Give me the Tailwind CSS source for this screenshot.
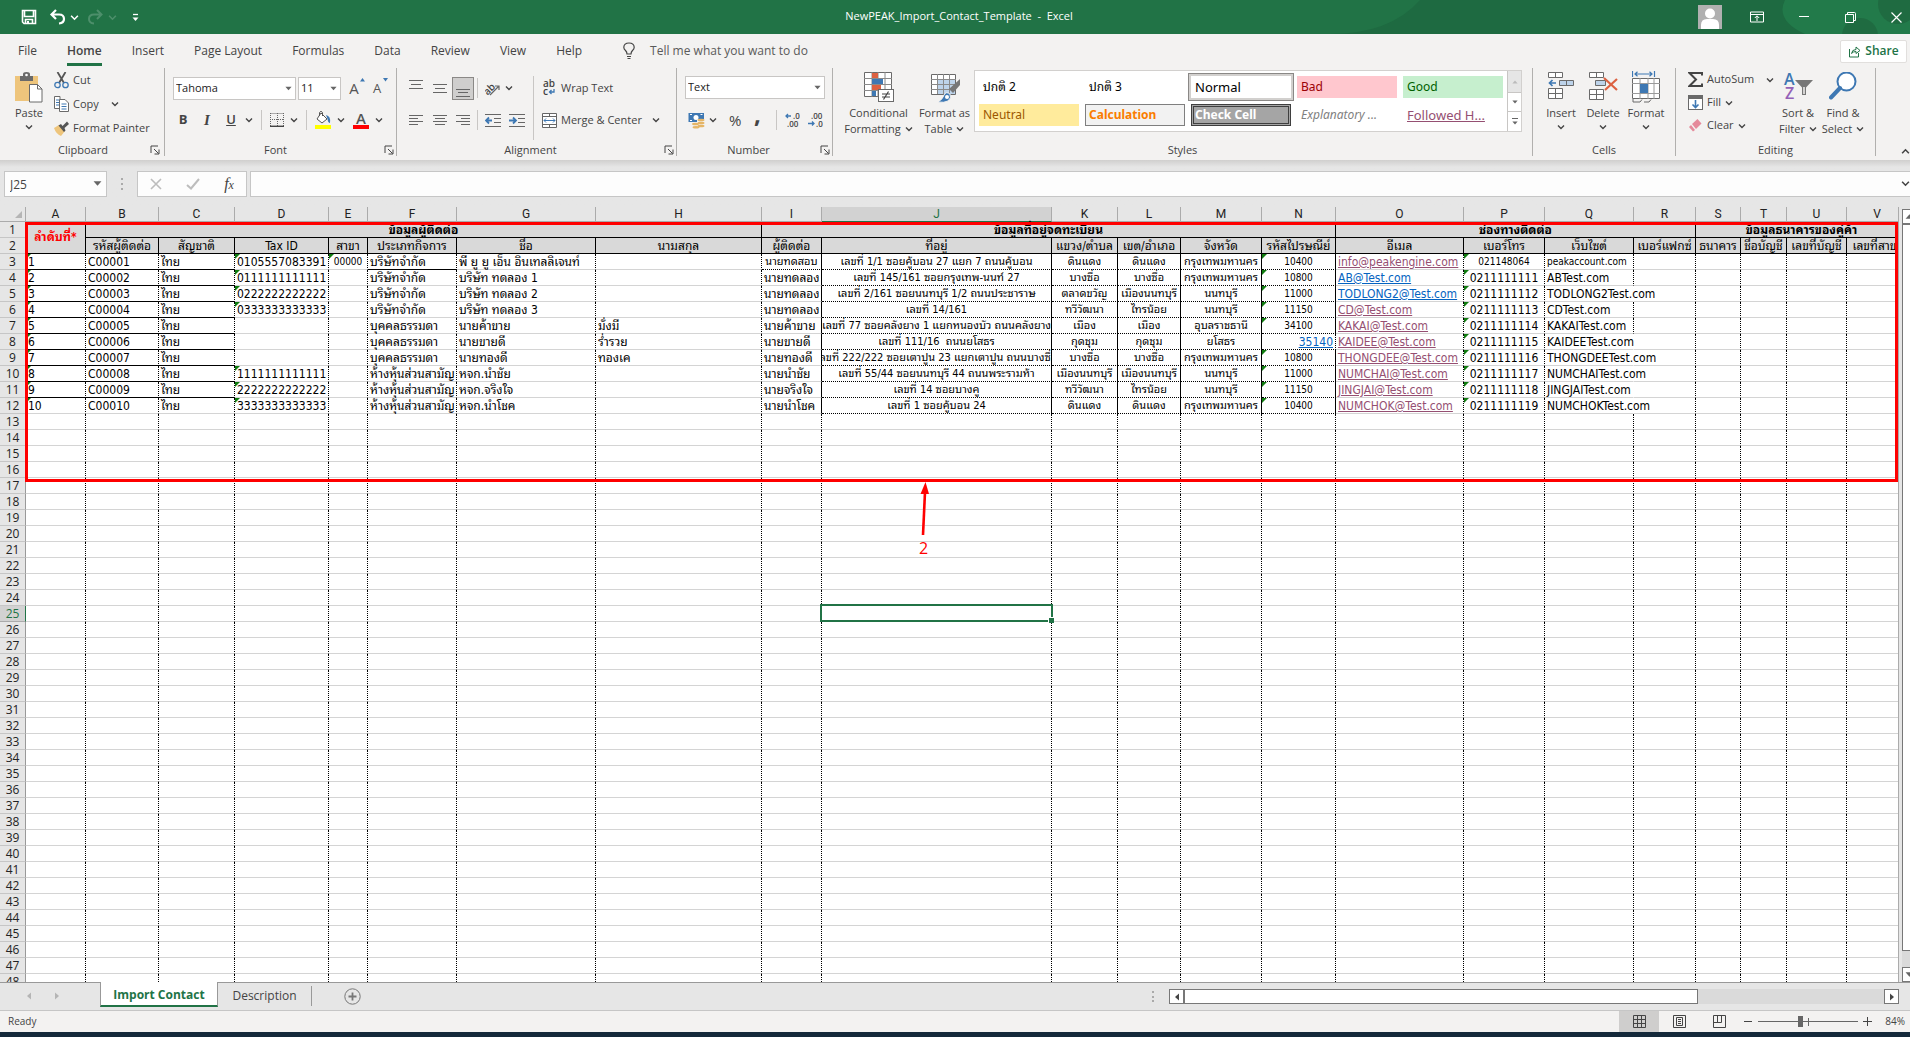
<!DOCTYPE html>
<html lang="en">
<head>
  <meta charset="UTF-8" />
  <meta name="viewport" content="width=device-width, initial-scale=1.0"/>
  <title>NewPEAK_Import_Contact_Template - Excel</title>
  <script src="https://cdn.jsdelivr.net/npm/@tailwindcss/browser@4"></script>
</head>
<body class="h-screen flex flex-col overflow-hidden bg-[#14293a] font-['Open_Sans','Noto_Sans_Thai_Looped',sans-serif] text-[11px] text-[#444444]">

  <!-- Shared icon symbols -->
  <svg class="hidden">
    <symbol id="chev" viewBox="0 0 8 8"><path d="M1 2.5 L4 5.5 L7 2.5" fill="none" stroke="currentColor" stroke-width="1.4"/></symbol>
    <symbol id="down" viewBox="0 0 8 8"><path d="M0.5 2 H7.5 L4 6 Z" fill="currentColor"/></symbol>
    <symbol id="launch" viewBox="0 0 10 10"><path d="M1 8 V1 H8 M4 4 L8.5 8.5 M9 4.5 V9 H4.5" fill="none" stroke="currentColor"/></symbol>
  </svg>

  <!-- Title bar -->
  <header class="h-[34px] shrink-0 bg-[#217346] text-white flex items-center relative">
    <div class="flex items-center pl-[21px]">
      <button aria-label="Save" class="w-4"><svg width="16" height="16" viewBox="0 0 16 16"><path d="M1.5 1.5 H14.5 V14.5 H3 L1.5 13 Z M3.5 1.5 V7.5 H12.5 V1.5 M4.5 14.5 V10.5 H11.5 V14.5" fill="none" stroke="white" stroke-width="1.6"/><rect x="6" y="12" width="2" height="3" fill="white"/></svg></button>
      <button aria-label="Undo" class="ml-3 flex items-center gap-1"><svg width="17" height="16" viewBox="0 0 17 16"><path d="M7 1 L2.5 5.5 L7 10 M3 5.5 H10 Q15 5.5 15 10 Q15 14 10 14.5" fill="none" stroke="white" stroke-width="2.2"/></svg><svg width="9" height="9"><use href="#chev"/></svg></button>
      <button aria-label="Redo" class="ml-2 flex items-center gap-1 text-[#4d8f6b]"><svg width="17" height="16" viewBox="0 0 17 16"><path d="M10 1 L14.5 5.5 L10 10 M14 5.5 H7 Q2 5.5 2 10 Q2 14 7 14.5" fill="none" stroke="currentColor" stroke-width="2"/></svg><svg width="9" height="9"><use href="#chev"/></svg></button>
      <button aria-label="Customize toolbar" class="ml-[14px]"><svg width="9" height="9" viewBox="0 0 9 9"><path d="M2 1.5 H7" stroke="white" stroke-width="1.3"/><path d="M1.5 4.5 H7.5 L4.5 8 Z" fill="white"/></svg></button>
    </div>
    <div class="flex-1"></div>
    <div class="w-[640px] h-full relative flex items-center justify-end bg-[#1e6840]/80 overflow-hidden">
      <svg class="absolute inset-0" width="640" height="34"><path d="M0 0 H150 Q120 34 60 34 H0 Z" fill="#217346"/><path d="M515 0 H640 V34 H535 Q505 20 515 0 Z" fill="#227a4a"/><circle cx="590" cy="36" r="18" fill="#1f6b41"/><circle cx="628" cy="4" r="20" fill="#1f6b41"/></svg>
      <button aria-label="Account" class="relative size-6 bg-[#b0b0b0] mr-7"><svg width="24" height="24" viewBox="0 0 24 24"><circle cx="12" cy="8.5" r="5" fill="white"/><path d="M3 24 V20 Q3 14 9 14 H15 Q21 14 21 20 V24 Z" fill="white"/></svg></button>
      <button aria-label="Ribbon display options" class="relative mr-[35px]"><svg width="14" height="12" viewBox="0 0 14 12"><path d="M.5 1 H13.5 V11 H.5 Z M.5 3.5 H13.5 M7 10 V5 M4.8 7 L7 4.8 L9.2 7" fill="none" stroke="white"/></svg></button>
      <button aria-label="Minimize" class="relative mr-9"><svg width="10" height="12"><path d="M0 5.5 H10" stroke="white"/></svg></button>
      <button aria-label="Restore" class="relative mr-[35px]"><svg width="11" height="11" viewBox="0 0 11 11"><path d="M.5 2.5 H8.5 V10.5 H.5 Z M2.5 2.5 V.5 H9.5 Q10.5 .5 10.5 1.5 V8.5 H8.5" fill="none" stroke="white"/></svg></button>
      <button aria-label="Close" class="relative mr-2"><svg width="11" height="11" viewBox="0 0 11 11"><path d="M.5 .5 L10.5 10.5 M10.5 .5 L.5 10.5" stroke="white" stroke-width="1.2"/></svg></button>
    </div>
    <h1 class="absolute inset-x-0 top-0 pl-2 leading-[32px] text-center pointer-events-none">NewPEAK_Import_Contact_Template&nbsp; -&nbsp; Excel</h1>
  </header>

  <!-- Ribbon tabs -->
  <nav class="h-[34px] shrink-0 bg-[#f3f2f1] flex items-center text-[12px] px-[3px]">
    <button class="px-[15px] h-7">File</button>
    <button class="px-[15px] h-7 font-semibold relative">Home<span class="absolute inset-x-[15px] bottom-[-1px] h-[3px] bg-[#217346]"></span></button>
    <button class="px-[15px] h-7">Insert</button>
    <button class="px-[15px] h-7">Page Layout</button>
    <button class="px-[15px] h-7">Formulas</button>
    <button class="px-[15px] h-7">Data</button>
    <button class="px-[15px] h-7">Review</button>
    <button class="px-[15px] h-7">View</button>
    <button class="px-[15px] h-7">Help</button>
    <button class="ml-[26px] h-7 flex items-center gap-[15px] text-[#5a5a5a]"><svg width="12" height="18" viewBox="0 0 12 18"><path d="M4 12 Q4 10 2.5 8.5 Q.8 7 .8 5.2 Q1 1 6 1 Q11 1 11.2 5.2 Q11.2 7 9.5 8.5 Q8 10 8 12 Z M4 14.5 H8 M4.5 16.5 H7.5" fill="none" stroke="#444" stroke-width="1.2"/></svg>Tell me what you want to do</button>
    <button class="ml-auto h-[23px] w-[67px] bg-white border border-[#e1dfdd] rounded-xs text-[#217346] font-semibold flex items-center justify-center gap-1"><svg width="13" height="13" viewBox="0 0 13 13"><path d="M1.5 4 V12 H10.5 V8 M3.5 8.5 Q4 4.5 8 4.5 V2 L12 5.5 L8 8.5 V6.5 Q5 6.5 3.5 8.5" fill="none" stroke="#217346"/></svg>Share</button>
  </nav>

  <!-- Ribbon -->
  <section class="h-[92px] shrink-0 bg-[#f3f2f1] flex pb-1">
    <!-- Clipboard -->
    <div class="w-[165px] shrink-0 border-r border-[#b1b0ae] flex flex-col">
      <div class="flex h-[78px]">
        <button class="w-[42px] ml-2 flex flex-col items-center pt-1">
          <svg width="28" height="31" viewBox="0 0 28 31"><rect x="0" y="4" width="23" height="25" fill="#eec57c"/><path d="M5 4 H8 V2 Q8 0 11.5 0 Q15 0 15 2 V4 H18 V9 H5 Z" fill="#6a6a6a"/><circle cx="11.5" cy="3" r="1.3" fill="#fff"/><path d="M14.5 12.5 H22.5 L27 17 V30 H14.5 Z" fill="#fff" stroke="#6a6a6a"/><path d="M22.5 12.5 V17 H27" fill="none" stroke="#6a6a6a"/></svg>
          <span class="leading-5">Paste</span><svg width="8" height="8"><use href="#chev"/></svg>
        </button>
        <div class="flex flex-col">
          <button class="h-6 flex items-center gap-1 pl-1"><svg width="15" height="17" viewBox="0 0 15 17"><path d="M3.5 0 L10 11 M11.5 0 L5 11" stroke="#555" stroke-width="1.8"/><circle cx="3.5" cy="13" r="2.7" fill="none" stroke="#3e78b3" stroke-width="1.3"/><circle cx="11.5" cy="13" r="2.7" fill="none" stroke="#3e78b3" stroke-width="1.3"/></svg>Cut</button>
          <button class="h-6 flex items-center gap-1 pl-1"><svg width="15" height="16" viewBox="0 0 15 16"><path d="M.5 .5 H6 V12.5 H.5 Z" fill="#fff" stroke="#6a6a6a"/><path d="M2 4 H5 M2 6.5 H5 M2 9 H5" stroke="#3e78b3"/><path d="M5.5 3.5 H11 L14.5 7 V15.5 H5.5 Z" fill="#fff" stroke="#6a6a6a"/><path d="M7.5 8 H12.5 M7.5 10.5 H12.5 M7.5 13 H12.5" stroke="#3e78b3"/></svg>Copy<svg class="ml-2" width="8" height="8"><use href="#chev"/></svg></button>
          <button class="h-6 flex items-center gap-1 pl-1"><svg width="15" height="15" viewBox="0 0 15 15"><path d="M0 7 L5 4 L11 10 L7 15 Q2 13 0 7" fill="#eec57c"/><path d="M4.5 4.5 L7 3 L8.5 5 L13 .5 L15 3 L10.5 7 L11.5 9.5 L10 11 Z" fill="#555"/></svg>Format Painter</button>
        </div>
      </div>
      <div class="flex-1 flex items-center leading-3"><span class="flex-1 text-center pl-4">Clipboard</span><svg class="mr-1" width="10" height="10"><use href="#launch"/></svg></div>
    </div>

    <!-- Font -->
    <div class="w-[232px] shrink-0 border-r border-[#b1b0ae] flex flex-col">
      <div class="h-[78px] flex flex-col pl-2 pt-2 gap-2">
        <div class="flex items-center h-6 text-[#222]">
          <label class="relative w-[123px]"><select aria-label="Font" class="appearance-none w-full h-[23px] bg-white border border-[#c8c6c4] pl-[2px]"><option>Tahoma</option></select><svg class="absolute right-1 top-2 text-[#666]" width="7" height="7"><use href="#down"/></svg></label>
          <label class="relative w-[43px] ml-[2px]"><select aria-label="Font size" class="appearance-none w-full h-[23px] bg-white border border-[#c8c6c4] pl-[2px]"><option>11</option></select><svg class="absolute right-1 top-2 text-[#666]" width="7" height="7"><use href="#down"/></svg></label>
          <button class="w-[22px] ml-[2px] text-[15px] leading-5 relative text-[#555]">A<svg class="absolute right-0 top-0" width="5" height="4"><path d="M0 3.5 L2.5 0 L5 3.5" fill="#3e78b3"/></svg></button>
          <button class="w-[22px] ml-px text-[13px] leading-5 relative text-[#555]">A<svg class="absolute right-0 top-0" width="5" height="4"><path d="M0 0 L2.5 3.5 L5 0" fill="#3e78b3"/></svg></button>
        </div>
        <div class="flex items-center h-6 text-[13px]">
          <button class="w-5 font-bold">B</button>
          <button class="w-5 ml-1 italic font-semibold font-['Liberation_Serif',serif] text-[15px]">I</button>
          <button class="w-5 ml-1 underline font-semibold">U</button>
          <svg class="ml-1" width="8" height="8"><use href="#chev"/></svg>
          <span class="w-px h-5 bg-[#c8c6c4] ml-2"></span>
          <svg class="ml-2" width="14" height="14" viewBox="0 0 14 14"><path d="M.5 .5 H13.5 M.5 0 V13 M13.5 0 V13 M7.5 0 V13 M0 6.5 H14" stroke="#666" stroke-dasharray="1 1"/><path d="M0 13.3 H14" stroke="#444" stroke-width="1.4"/></svg>
          <svg class="ml-[6px]" width="8" height="8"><use href="#chev"/></svg>
          <span class="w-px h-5 bg-[#c8c6c4] ml-2"></span>
          <svg class="ml-2" width="16" height="20" viewBox="0 0 16 20"><path d="M6 3 L12 9 L7 13 L2 9 Z" fill="#fff" stroke="#555"/><path d="M4.5 6 V2.5 Q6 0 7.5 2.5 V6" fill="none" stroke="#555"/><path d="M11 5 Q16 6 15 13 Q13 13 12.5 9 Z" fill="#3e78b3"/><rect y="15" width="16" height="4" fill="#ffff00"/></svg>
          <svg class="ml-[6px]" width="8" height="8"><use href="#chev"/></svg>
          <button class="ml-2 w-4 flex flex-col items-center leading-[14px] text-[15px] font-semibold text-[#555]">A<span class="w-4 h-1 bg-[#ff0000]"></span></button>
          <svg class="ml-[6px]" width="8" height="8"><use href="#chev"/></svg>
        </div>
      </div>
      <div class="flex-1 flex items-center leading-3"><span class="flex-1 text-center pl-[2px]">Font</span><svg class="mr-[2px]" width="10" height="10"><use href="#launch"/></svg></div>
    </div>

    <!-- Alignment -->
    <div class="w-[280px] shrink-0 border-r border-[#b1b0ae] flex flex-col">
      <div class="h-[78px] flex pt-2">
        <div class="flex flex-col gap-2 w-[137px] h-16 pl-[7px] border-r border-[#c8c6c4]">
          <div class="flex items-center h-6 gap-px">
            <button aria-label="Top align" class="w-[23px] h-[23px] flex justify-center"><svg width="14" height="22"><path d="M0 3.5 H14 M2 7.5 H12 M0 11.5 H14" stroke="#666"/></svg></button>
            <button aria-label="Middle align" class="w-[23px] h-[23px] flex justify-center"><svg width="14" height="22"><path d="M0 7.5 H14 M2 11.5 H12 M0 15.5 H14" stroke="#666"/></svg></button>
            <button aria-label="Bottom align" class="w-[22px] h-[23px] flex justify-center bg-[#cfcecd] border border-[#8a8886]"><svg width="14" height="22"><path d="M0 11.5 H14 M2 14.5 H12 M0 18.5 H14" stroke="#666"/></svg></button>
            <span class="w-px h-5 bg-[#c8c6c4] ml-[2px]"></span>
            <button aria-label="Orientation" class="ml-[6px] flex items-center gap-1"><svg width="16" height="16" viewBox="0 0 16 16"><text x="-2" y="11" font-size="10" font-weight="600" fill="#444" transform="rotate(-45 6 8)">ab</text><path d="M5 15 L14 6 M14 10 V6 H10" fill="none" stroke="#666" stroke-width="1.2"/></svg><svg width="8" height="8"><use href="#chev"/></svg></button>
          </div>
          <div class="flex items-center h-6 gap-px">
            <button aria-label="Align left" class="w-[23px] flex justify-center"><svg width="14" height="12"><path d="M0 1.5 H14 M0 4.5 H9 M0 7.5 H14 M0 10.5 H9" stroke="#666"/></svg></button>
            <button aria-label="Center" class="w-[23px] flex justify-center"><svg width="14" height="12"><path d="M0 1.5 H14 M2 4.5 H12 M0 7.5 H14 M2 10.5 H12" stroke="#666"/></svg></button>
            <button aria-label="Align right" class="w-[22px] flex justify-center"><svg width="14" height="12"><path d="M0 1.5 H14 M5 4.5 H14 M0 7.5 H14 M5 10.5 H14" stroke="#666"/></svg></button>
            <span class="w-px h-5 bg-[#c8c6c4] ml-[2px]"></span>
            <button aria-label="Decrease indent" class="ml-[6px]"><svg width="16" height="13" viewBox="0 0 16 13"><path d="M0 .5 H16 M9 4.5 H16 M9 8.5 H16 M0 12.5 H16" stroke="#666"/><path d="M7 6.5 H1 M4 3.5 L1 6.5 L4 9.5" fill="none" stroke="#3e78b3" stroke-width="1.8"/></svg></button>
            <button aria-label="Increase indent" class="ml-[7px]"><svg width="16" height="13" viewBox="0 0 16 13"><path d="M0 .5 H16 M9 4.5 H16 M9 8.5 H16 M0 12.5 H16" stroke="#666"/><path d="M0 6.5 H6 M4 3.5 L7 6.5 L4 9.5" fill="none" stroke="#3e78b3" stroke-width="1.8"/></svg></button>
          </div>
        </div>
        <div class="flex flex-col gap-2 pl-2">
          <button class="h-6 flex items-center gap-1"><svg width="15" height="18" viewBox="0 0 15 18"><text x="1" y="8" font-size="10" font-weight="600" fill="#444">ab</text><text x="1" y="16" font-size="10" font-weight="600" fill="#444">c</text><path d="M12 10 V13 H7.5 M9.5 11 L7.5 13 L9.5 15" fill="none" stroke="#3e78b3" stroke-width="1.3"/></svg>Wrap Text</button>
          <button class="h-6 flex items-center gap-1"><svg width="15" height="15" viewBox="0 0 15 15"><path d="M.5 .5 H14.5 V14.5 H.5 Z M.5 3.5 H14.5 M.5 11.5 H14.5 M7.5 0 V3.5 M7.5 11.5 V15" fill="#fff" stroke="#666"/><path d="M2 7.5 H13 M4 5.5 L2 7.5 L4 9.5 M11 5.5 L13 7.5 L11 9.5" fill="none" stroke="#3e78b3"/></svg>Merge &amp; Center<svg class="ml-[6px]" width="8" height="8"><use href="#chev"/></svg></button>
        </div>
      </div>
      <div class="flex-1 flex items-center leading-3"><span class="flex-1 text-center">Alignment</span><svg class="mr-[2px]" width="10" height="10"><use href="#launch"/></svg></div>
    </div>

    <!-- Number -->
    <div class="w-[156px] shrink-0 border-r border-[#b1b0ae] flex flex-col">
      <div class="h-[78px] flex flex-col pl-2 pr-[7px] pt-2 gap-2">
        <label class="relative h-6 text-[#222]"><select aria-label="Number format" class="appearance-none w-full h-[23px] bg-white border border-[#c8c6c4] pl-[2px]"><option>Text</option></select><svg class="absolute right-1 top-2 text-[#666]" width="7" height="7"><use href="#down"/></svg></label>
        <div class="flex items-center h-6 pl-[3px]">
          <svg width="17" height="17" viewBox="0 0 17 17"><rect x=".5" y="1" width="15.5" height="9" fill="#3e78b3"/><circle cx="8" cy="5.5" r="2.5" fill="#fff"/><path d="M2 2.5 H4 M12.5 2.5 H14.5 M2 8.5 H4" stroke="#fff"/><path d="M9 7 H16 V15 H4 V11 H9 Z" fill="#f3f2f1"/><ellipse cx="13" cy="8" rx="3.5" ry="1.3" fill="#e5b566"/><ellipse cx="13" cy="11" rx="3.5" ry="1.3" fill="#e5b566"/><ellipse cx="13" cy="14" rx="3.5" ry="1.3" fill="#e5b566"/><ellipse cx="7.5" cy="12" rx="3.5" ry="1.3" fill="#e5b566"/><ellipse cx="8" cy="15.3" rx="3.5" ry="1.3" fill="#e5b566"/></svg>
          <svg class="ml-1" width="8" height="8"><use href="#chev"/></svg>
          <button class="ml-3 text-[15px]">%</button>
          <button class="ml-2 w-4 h-6 text-[24px] leading-3 pb-3 font-bold">,</button>
          <span class="w-px h-5 bg-[#c8c6c4] ml-[11px]"></span>
          <svg class="ml-2" width="15" height="16" viewBox="0 0 15 16"><text x="8" y="7" font-size="8" font-weight="600" fill="#444">.0</text><text x="2" y="15" font-size="8" font-weight="600" fill="#444">.00</text><path d="M6 4 H1 M3 2 L1 4 L3 6" fill="none" stroke="#3e78b3" stroke-width="1.3"/></svg>
          <svg class="ml-2" width="15" height="16" viewBox="0 0 15 16"><text x="3" y="7" font-size="8" font-weight="600" fill="#444">.00</text><text x="8" y="15" font-size="8" font-weight="600" fill="#444">.0</text><path d="M0 11.5 H6 M4 9.5 L6 11.5 L4 13.5" fill="none" stroke="#3e78b3" stroke-width="1.3"/></svg>
        </div>
      </div>
      <div class="flex-1 flex items-center leading-3"><span class="flex-1 text-center">Number</span><svg class="mr-[2px]" width="10" height="10"><use href="#launch"/></svg></div>
    </div>

    <!-- Styles -->
    <div class="flex-1 min-w-0 border-r border-[#b1b0ae] flex flex-col">
      <div class="h-[78px] flex pl-2">
        <button class="w-[75px] flex flex-col items-center pt-1 leading-4">
          <svg width="30" height="31" viewBox="0 0 30 31"><path d="M.5 .5 H27.5 V24.5 H.5 Z" fill="#fff" stroke="#6a6a6a"/><path d="M8 0 V25 M14 0 V25 M21 0 V25 M0 6.5 H28 M0 12.5 H28 M0 18.5 H28" stroke="#8a8a8a"/><path d="M8 1 H14 V6 H8 Z M8 13 H17 V18 H8 Z" fill="#dc6141"/><path d="M8 7 H19 V12 H8 Z M8 19 H12 V24 H8 Z" fill="#3e78b3"/><rect x="14.5" y="17.5" width="15" height="12" fill="#fff" stroke="#6a6a6a"/><path d="M18 22 H26 M18 25 H26 M24.5 19.5 L19.5 27.5" stroke="#444" stroke-width="1.2"/></svg>
          <span class="mt-[2px]">Conditional</span><span class="flex items-center gap-1 whitespace-nowrap">Formatting<svg width="8" height="8"><use href="#chev"/></svg></span>
        </button>
        <button class="w-[57px] flex flex-col items-center pt-1 leading-4 whitespace-nowrap">
          <svg width="30" height="31" viewBox="0 0 30 31"><path d="M1.5 2.5 H25.5 V22.5 H1.5 Z" fill="#fff" stroke="#6a6a6a"/><path d="M7 8 H25 V22 H7 Z" fill="#bdd3ea"/><path d="M7.5 2 V22 M13.5 2 V22 M19.5 2 V22 M1 7.5 H26 M1 12.5 H26 M1 17.5 H26" stroke="#8a8a8a"/><path d="M30 7 V13 L23 21 L19 17 Z" fill="#777"/><path d="M8 30 Q13 27 14 23 Q16 19 20 22 Q22 26 18 29 Q14 31 8 30" fill="#3e78b3" stroke="#f3f2f1"/><circle cx="17" cy="25" r="2" fill="#fff"/></svg>
          <span class="mt-[2px]">Format as</span><span class="flex items-center gap-1">Table<svg width="8" height="8"><use href="#chev"/></svg></span>
        </button>
        <div class="h-[62px] mt-[2px] ml-px bg-white border border-[#d2d0ce] flex text-[12px] leading-5 text-black">
          <div class="grid grid-cols-[repeat(5,100px)] auto-rows-[22px] gap-[6px] px-1 py-[5px] text-left font-['Noto_Sans','Noto_Sans_Thai_Looped',sans-serif]">
            <button class="text-left px-1">ปกติ 2</button>
            <button class="text-left px-1">ปกติ 3</button>
            <button class="text-left px-1 text-[13px] outline-1 outline-[#8a8886] outline-offset-2 ring-2 ring-[#d2d0ce]">Normal</button>
            <button class="text-left px-1 bg-[#ffc7ce] text-[#9c0006]">Bad</button>
            <button class="text-left px-1 bg-[#c6efce] text-[#006100]">Good</button>
            <button class="text-left px-1 bg-[#ffeb9c] text-[#9c5700]">Neutral</button>
            <button class="text-left px-[3px] bg-[#f2f2f2] border border-[#7f7f7f] text-[#fa7d00] font-bold">Calculation</button>
            <button class="text-left px-px bg-[#a5a5a5] border-3 border-double border-[#3f3f3f] text-white font-bold leading-4">Check Cell</button>
            <button class="text-left px-1 text-[#7f7f7f] italic whitespace-nowrap">Explanatory ...</button>
            <button class="text-left px-1 text-[13px] text-[#954f72] underline">Followed H...</button>
          </div>
          <div class="w-[14px] border-l border-[#c8c6c4] flex flex-col text-[#666]">
            <button aria-label="Previous styles" class="h-[21px] bg-[#e6e6e6] flex items-center justify-center text-[#bbb]"><svg class="rotate-180" width="6" height="6"><use href="#down"/></svg></button>
            <button aria-label="Next styles" class="h-5 border-y border-[#c8c6c4] flex items-center justify-center"><svg width="6" height="6"><use href="#down"/></svg></button>
            <button aria-label="More styles" class="flex-1 flex flex-col items-center justify-center gap-px"><span class="w-[6px] h-px bg-[#666]"></span><svg width="6" height="6"><use href="#down"/></svg></button>
          </div>
        </div>
      </div>
      <div class="flex-1 flex items-center justify-center leading-3">Styles</div>
    </div>

    <!-- Cells -->
    <div class="w-[143px] shrink-0 border-r border-[#b1b0ae] flex flex-col">
      <div class="h-[78px] flex pl-[7px]">
        <button class="w-[42px] flex flex-col items-center pt-1">
          <svg width="26" height="31" viewBox="0 0 26 31"><path d="M.5 .5 H14.5 V5.5 H.5 Z M7.5 .5 V5.5 M.5 16.5 H14.5 V26.5 H.5 Z M7.5 16.5 V26.5 M.5 21.5 H14.5" fill="#fff" stroke="#6a6a6a"/><path d="M11.5 8.5 H25.5 V13.5 H11.5 Z M18.5 8.5 V13.5" fill="#bdd3ea" stroke="#6a6a6a"/><path d="M8 11 H2 M4.5 8 L1.5 11 L4.5 14" fill="none" stroke="#3e78b3" stroke-width="1.7"/></svg>
          <span class="leading-5">Insert</span><svg width="8" height="8"><use href="#chev"/></svg>
        </button>
        <button class="w-[42px] flex flex-col items-center pt-1">
          <svg width="30" height="31" viewBox="0 0 30 31"><path d="M1.5 .5 H15.5 V5.5 H1.5 Z M8.5 .5 V5.5 M1.5 17.5 H15.5 V27.5 H1.5 Z M8.5 17.5 V27.5 M1.5 22.5 H15.5" fill="#fff" stroke="#6a6a6a"/><path d="M7.5 8.5 H17.5 V13.5 H7.5 Z" fill="#bdd3ea" stroke="#6a6a6a"/><path d="M16 6 L29 18 M29 7 L17 18" fill="none" stroke="#dc6141" stroke-width="2.2"/></svg>
          <span class="leading-5">Delete</span><svg width="8" height="8"><use href="#chev"/></svg>
        </button>
        <button class="w-[44px] flex flex-col items-center pt-[3px]">
          <svg width="28" height="32" viewBox="0 0 28 32"><path d="M.5 7.5 H27.5 V27.5 H.5 Z" fill="#fff" stroke="#6a6a6a"/><path d="M8 7 V28 M16 7 V28 M22 7 V28 M0 12.5 H28 M0 22.5 H28" stroke="#9a9a9a"/><rect x="8" y="13" width="8" height="9" fill="#3e78b3"/><path d="M1 28 V31 H8 L10 28.5 M12 31 H17 L19 28.5" fill="none" stroke="#6a6a6a"/><path d="M.5 0 V6 M22.5 0 V6 M3 3 H20 M5.5 .8 L3 3 L5.5 5.2 M17.5 .8 L20 3 L17.5 5.2" fill="none" stroke="#3e78b3" stroke-width="1.2"/></svg>
          <span class="leading-5">Format</span><svg width="8" height="8"><use href="#chev"/></svg>
        </button>
      </div>
      <div class="flex-1 flex items-center justify-center leading-3">Cells</div>
    </div>

    <!-- Editing -->
    <div class="w-[200px] shrink-0 border-r border-[#b1b0ae] flex flex-col">
      <div class="h-[78px] flex pl-3">
        <div class="flex flex-col w-[86px]">
          <button class="h-[23px] flex items-center gap-1"><svg width="15" height="15" viewBox="0 0 15 15"><path d="M14 3.5 V1 H1.5 L8 7.5 L1.5 14 H14 V11.5" fill="none" stroke="#444" stroke-width="2"/></svg>AutoSum<svg class="ml-auto" width="8" height="8"><use href="#chev"/></svg></button>
          <button class="h-[23px] flex items-center gap-1"><svg width="15" height="15" viewBox="0 0 15 15"><rect x=".5" y=".5" width="14" height="14" fill="#fff" stroke="#6a6a6a"/><rect width="15" height="4" fill="#6a6a6a"/><path d="M7.5 5 V12.5 M4.5 9.5 L7.5 12.5 L10.5 9.5" fill="none" stroke="#3e78b3" stroke-width="1.6"/></svg>Fill<svg width="8" height="8"><use href="#chev"/></svg></button>
          <button class="h-[23px] flex items-center gap-1"><svg width="15" height="15" viewBox="0 0 15 15"><path d="M4 6 L9.5 1 L13.5 5.5 L8 11 Z" fill="#e58a9b"/><path d="M3 7 L7 12 L5 13.5 L1 9 Z" fill="#e58a9b"/></svg>Clear<svg width="8" height="8"><use href="#chev"/></svg></button>
        </div>
        <button class="w-[48px] flex flex-col items-center pt-1 leading-4">
          <svg width="30" height="31" viewBox="0 0 30 31"><text x="1" y="13" font-size="16" font-weight="600" fill="#3e78b3">A</text><text x="2" y="27" font-size="16" font-weight="600" fill="#9361b7">Z</text><path d="M12 8 H30 L23 15.5 V23 H19 V15.5 Z" fill="#777"/><path d="M21 15 V22" stroke="#f3f2f1" stroke-width="1.5"/></svg>
          <span class="mt-[2px]">Sort &amp;</span><span class="flex items-center gap-1">Filter<svg width="8" height="8"><use href="#chev"/></svg></span>
        </button>
        <button class="w-[42px] flex flex-col items-center pt-1 leading-4">
          <svg width="28" height="31" viewBox="0 0 28 31"><circle cx="17.5" cy="9.5" r="9" fill="#fff" stroke="#3e78b3" stroke-width="2"/><path d="M11 16 L2 25.5" stroke="#3e78b3" stroke-width="4" stroke-linecap="round"/></svg>
          <span class="mt-[2px] whitespace-nowrap">Find &amp;</span><span class="flex items-center gap-1">Select<svg width="8" height="8"><use href="#chev"/></svg></span>
        </button>
      </div>
      <div class="flex-1 flex items-center justify-center leading-3">Editing</div>
    </div>
    <div class="w-[34px] shrink-0 flex items-end justify-end"><button aria-label="Collapse ribbon"><svg class="rotate-180" width="9" height="9"><use href="#chev"/></svg></button></div>
  </section>

  <!-- Formula bar -->
  <section class="h-[47px] shrink-0 bg-[#e6e6e6] bg-linear-to-b from-[#d0cfce] from-0% to-[#e6e6e6] to-15% flex pt-[11px] pl-1 text-[12px]">
    <label class="relative w-[103px] h-[26px]"><input aria-label="Name box" value="J25" class="w-full h-full bg-[#fdfdfd] border border-[#c6c6c6] pl-[5px]"/><svg class="absolute right-[5px] top-2 text-[#666]" width="9" height="9"><use href="#down"/></svg></label>
    <span class="w-[30px] h-[26px] flex flex-col items-center justify-center gap-[3px]"><i class="size-[2px] bg-[#aaa]"></i><i class="size-[2px] bg-[#aaa]"></i><i class="size-[2px] bg-[#aaa]"></i></span>
    <div class="w-[110px] h-[26px] bg-[#fdfdfd] border border-[#c6c6c6] flex items-center justify-around">
      <button aria-label="Cancel"><svg width="12" height="12"><path d="M1 1 L11 11 M11 1 L1 11" stroke="#bdbdbd" stroke-width="1.6"/></svg></button>
      <button aria-label="Enter"><svg width="14" height="12"><path d="M1 7 L5 10.5 L13 1" fill="none" stroke="#bdbdbd" stroke-width="2"/></svg></button>
      <button aria-label="Insert function" class="italic font-['Liberation_Serif',serif] text-[16px] leading-5 text-[#444]">f<span class="text-[12px]">x</span></button>
    </div>
    <label class="relative flex-1 ml-[3px] h-[26px]"><input aria-label="Formula" class="w-full h-full bg-[#fdfdfd] border border-r-0 border-[#c6c6c6] px-1"/><svg class="absolute right-0 top-2" width="9" height="9"><use href="#chev"/></svg></label>
  </section>

  <!-- Sheet -->
  <main class="flex-1 min-h-0 flex bg-[#e6e6e6]">
    <div class="flex-1 min-w-0 relative overflow-hidden border-r border-[#ababab] font-['DejaVu_Sans_Condensed','Noto_Sans_Thai_Looped','Waree','Loma',sans-serif] text-[12px] text-black">
      <table id="sheet" class="table-fixed w-[1908px] border-separate border-spacing-0 bg-white leading-[15px]">
        <colgroup id="cols"></colgroup>
        <thead><tr id="letters" class="h-[15px] bg-[#e6e6e6] text-[#222] font-['Roboto',sans-serif]"></tr></thead>
        <tbody id="rows"></tbody>
      </table>
      <!-- Selected cell J25 -->
      <div class="absolute left-[820px] top-[397px] w-[233px] h-[18px] border-2 border-[#217346]"><span class="absolute -right-[3px] -bottom-[3px] size-[6px] bg-[#217346] border-t border-l border-white"></span></div>
      <!-- Callout -->
      <div class="absolute left-[25px] right-0 top-[15px] h-[260px] border-3 border-[#ff0000]"></div>
      <svg class="absolute left-[915px] top-[275px]" width="20" height="55" viewBox="0 0 20 55"><path d="M10 10 L8 53" stroke="#ff0000" stroke-width="2.6"/><path d="M10.5 0 L14 12 H5.5 Z" fill="#ff0000"/></svg>
      <span class="absolute left-[919px] top-[331px] text-[16px] leading-5 text-[#ff0000] font-['Open_Sans',sans-serif]">2</span>
    </div>
    <!-- Vertical scrollbar -->
    <div class="w-[11px] shrink-0 pl-[3px] pt-[2px] overflow-hidden text-[#666]">
      <div class="w-[15px] h-full flex flex-col bg-[#dadada]">
        <button aria-label="Scroll up" class="h-[15px] bg-white border border-[#777] flex items-center justify-center"><svg class="rotate-180" width="9" height="9"><use href="#down"/></svg></button>
        <div class="flex-1 bg-white border border-[#777]"></div>
        <div class="h-4"></div>
        <button aria-label="Scroll down" class="h-[15px] bg-white border border-[#777] flex items-center justify-center"><svg width="9" height="9"><use href="#down"/></svg></button>
      </div>
    </div>
  </main>

  <!-- Sheet tabs -->
  <footer class="h-[28px] shrink-0 bg-[#e6e6e6] border-t border-[#999] flex text-[12px] text-[#444]">
    <div class="w-[100px] flex items-center pl-[25px] pb-[2px] gap-5 text-[#b5b5b5]"><button aria-label="Previous sheet"><svg class="rotate-90" width="8" height="8"><use href="#down"/></svg></button><button aria-label="Next sheet"><svg class="-rotate-90" width="8" height="8"><use href="#down"/></svg></button></div>
    <button class="w-[118px] h-[25px] -mt-px pt-[2px] bg-white border-x border-[#999] border-b-2 border-b-[#217346] text-[#217346] font-bold">Import Contact</button>
    <button class="w-[93px] h-[25px]">Description</button>
    <span class="w-px h-5 mt-[3px] bg-[#999]"></span>
    <button aria-label="New sheet" class="ml-8 h-[26px]"><svg width="17" height="17" viewBox="0 0 17 17"><circle cx="8.5" cy="8.5" r="7.7" fill="none" stroke="#777"/><path d="M8.5 4.5 V12.5 M4.5 8.5 H12.5" stroke="#777" stroke-width="1.8"/></svg></button>
    <div class="ml-auto w-[747px] flex mt-[6px] h-[15px]">
      <span class="w-[6px] mr-[11px] flex flex-col justify-between py-[2px]"><i class="size-[2px] bg-[#aaa]"></i><i class="size-[2px] bg-[#aaa]"></i><i class="size-[2px] bg-[#aaa]"></i></span>
      <button aria-label="Scroll left" class="w-[15px] bg-white border border-[#777] flex items-center justify-center"><svg class="rotate-90" width="8" height="8"><use href="#down"/></svg></button>
      <div class="flex-1 flex bg-[#dadada]"><div class="w-[514px] bg-white border border-[#777]"></div></div>
      <button aria-label="Scroll right" class="w-[15px] bg-white border border-[#777] flex items-center justify-center"><svg class="-rotate-90" width="8" height="8"><use href="#down"/></svg></button>
    </div>
    <div class="w-[11px]"></div>
  </footer>

  <!-- Status bar -->
  <footer class="h-[22px] shrink-0 mb-[5px] bg-[#f3f2f1] border-t border-[#c6c6c6] flex items-center text-[10px] pl-2">
    <span>Ready</span>
    <div class="ml-auto flex items-center h-full">
      <button aria-label="Normal view" class="w-10 h-full bg-[#cfcecd] flex items-center justify-center"><svg width="13" height="13"><path d="M.5 .5 H12.5 V12.5 H.5 Z M4.5 0 V13 M8.5 0 V13 M0 4.5 H13 M0 8.5 H13" fill="none" stroke="#444"/></svg></button>
      <button aria-label="Page layout view" class="w-10 h-full flex items-center justify-center"><svg width="13" height="13"><path d="M.5 .5 H12.5 V12.5 H.5 Z M3.5 2.5 H9.5 V10.5 H3.5 Z M5 4.5 H8 M5 6.5 H8 M5 8.5 H8" fill="none" stroke="#444"/></svg></button>
      <button aria-label="Page break view" class="w-10 h-full flex items-center justify-center"><svg width="13" height="13"><path d="M.5 .5 H12.5 V12.5 H.5 Z M4.5 0 V7.5 M8.5 0 V7.5 H0" fill="none" stroke="#444"/></svg></button>
      <button aria-label="Zoom out" class="ml-[5px] w-[9px]"><svg width="8" height="8"><path d="M0 3.5 H8" stroke="#444"/></svg></button>
      <span class="relative ml-[5px] w-[100px] h-4 flex items-center">
        <i class="absolute left-[50px] top-1 h-2 w-px bg-[#666]"></i>
        <input type="range" aria-label="Zoom" min="0" max="100" value="42" class="appearance-none w-full h-4 bg-transparent [&::-webkit-slider-runnable-track]:h-px [&::-webkit-slider-runnable-track]:bg-[#666] [&::-webkit-slider-thumb]:appearance-none [&::-webkit-slider-thumb]:h-[11px] [&::-webkit-slider-thumb]:w-[5px] [&::-webkit-slider-thumb]:-mt-[5px] [&::-webkit-slider-thumb]:bg-[#666]"/>
      </span>
      <button aria-label="Zoom in" class="ml-[5px] w-[9px]"><svg width="9" height="9"><path d="M0 4.5 H9 M4.5 0 V9" stroke="#444"/></svg></button>
      <span class="w-[38px] text-right pr-[5px]">84%</span>
    </div>
  </footer>

  <script>
    const widths = [60, 73, 76, 94, 39, 89, 139, 166, 60, 230, 66, 63, 81, 74, 128, 81, 89, 62, 45, 46, 60, 61];
    const letters = "ABCDEFGHIJKLMNOPQRSTUV".split("");

    const heads = ["", "รหัสผู้ติดต่อ", "สัญชาติ", "Tax ID", "สาขา", "ประเภทกิจการ", "ชื่อ", "นามสกุล", "ผู้ติดต่อ", "ที่อยู่", "แขวง/ตำบล", "เขต/อำเภอ", "จังหวัด", "รหัสไปรษณีย์", "อีเมล", "เบอร์โทร", "เว็บไซต์", "เบอร์แฟกซ์", "ธนาคาร", "ชื่อบัญชี", "เลขที่บัญชี", "เลขที่สาขา"];

    // Rows 3 to 12, columns A to Q
    const data = [
      ["1", "C00001", "ไทย", "0105557083391", "00000", "บริษัทจำกัด", "พี ยู ยู เอ็น อินเทลลิเจนท์", "", "นายทดสอบ", "เลขที่ 1/1 ซอยคู้บอน 27 แยก 7 ถนนคู้บอน", "ดินแดง", "ดินแดง", "กรุงเทพมหานคร", "10400", "info@peakengine.com", "021148064", "peakaccount.com"],
      ["2", "C00002", "ไทย", "0111111111111", "", "บริษัทจำกัด", "บริษัท ทดลอง 1", "", "นายทดลอง", "เลขที่ 145/161 ซอยกรุงเทพ-นนท์ 27", "บางซื่อ", "บางซื่อ", "กรุงเทพมหานคร", "10800", "AB@Test.com", "0211111111", "ABTest.com"],
      ["3", "C00003", "ไทย", "0222222222222", "", "บริษัทจำกัด", "บริษัท ทดลอง 2", "", "นายทดลอง", "เลขที่ 2/161 ซอยนนทบุรี 1/2 ถนนประชาราษ", "ตลาดขวัญ", "เมืองนนทบุรี", "นนทบุรี", "11000", "TODLONG2@Test.com", "0211111112", "TODLONG2Test.com"],
      ["4", "C00004", "ไทย", "0333333333333", "", "บริษัทจำกัด", "บริษัท ทดลอง 3", "", "นายทดลอง", "เลขที่ 14/161", "ทวีวัฒนา", "ไทรน้อย", "นนทบุรี", "11150", "CD@Test.com", "0211111113", "CDTest.com"],
      ["5", "C00005", "ไทย", "", "", "บุคคลธรรมดา", "นายค้าขาย", "มั่งมี", "นายค้าขาย", "เลขที่ 77 ซอยคลังยาง 1 แยกหนองบัว ถนนคลังยาง", "เมือง", "เมือง", "อุบลราชธานี", "34100", "KAKAI@Test.com", "0211111114", "KAKAITest.com"],
      ["6", "C00006", "ไทย", "", "", "บุคคลธรรมดา", "นายขายดี", "ร่ำรวย", "นายขายดี", "เลขที่ 111/16  ถนนยโสธร", "กุดชุม", "กุดชุม", "ยโสธร", "35140", "KAIDEE@Test.com", "0211111115", "KAIDEETest.com"],
      ["7", "C00007", "ไทย", "", "", "บุคคลธรรมดา", "นายทองดี", "ทองเค", "นายทองดี", "เลขที่ 222/222 ซอยเตาปูน 23 แยกเตาปูน ถนนบางซื่อ", "บางซื่อ", "บางซื่อ", "กรุงเทพมหานคร", "10800", "THONGDEE@Test.com", "0211111116", "THONGDEETest.com"],
      ["8", "C00008", "ไทย", "1111111111111", "", "ห้างหุ้นส่วนสามัญ", "หจก.นำชัย", "", "นายนำชัย", "เลขที่ 55/44 ซอยนนทบุรี 44 ถนนพระรามห้า", "เมืองนนทบุรี", "เมืองนนทบุรี", "นนทบุรี", "11000", "NUMCHAI@Test.com", "0211111117", "NUMCHAITest.com"],
      ["9", "C00009", "ไทย", "2222222222222", "", "ห้างหุ้นส่วนสามัญ", "หจก.จริงใจ", "", "นายจริงใจ", "เลขที่ 14 ซอยบางคู", "ทวีวัฒนา", "ไทรน้อย", "นนทบุรี", "11150", "JINGJAI@Test.com", "0211111118", "JINGJAITest.com"],
      ["10", "C00010", "ไทย", "3333333333333", "", "ห้างหุ้นส่วนสามัญ", "หจก.นำโชค", "", "นายนำโชค", "เลขที่ 1 ซอยคู้บอน 24", "ดินแดง", "ดินแดง", "กรุงเทพมหานคร", "10400", "NUMCHOK@Test.com", "0211111119", "NUMCHOKTest.com"]
    ];

    document.getElementById("cols").innerHTML = '<col style="width:26px">' + widths.map(w => `<col style="width:${w}px">`).join("");

    document.getElementById("letters").innerHTML =
      '<th aria-label="Select all" class="p-0 border-r border-b border-[#ababab]"><svg class="ml-[15px]" width="7" height="7"><path d="M7 0 V7 H0 Z" fill="#b5b5b5"/></svg></th>' +
      letters.map(l => l === "J"
        ? '<th class="p-0 font-normal bg-[#d2d2d2] text-[#217346] border-r border-b border-r-[#ababab] border-b-[#217346] leading-[14px]">J</th>'
        : `<th class="p-0 font-normal border-r border-b border-[#ababab] leading-[14px]">${l}</th>`).join("");

    const rowHead = n => n === 25
      ? '<th class="p-0 font-normal bg-[#d2d2d2] text-[#217346] border-b border-b-[#ababab] border-r border-r-[#217346] font-[\'Open_Sans\',sans-serif]">25</th>'
      : `<th class="p-0 font-normal bg-[#e6e6e6] text-[#222] border-r border-b border-r-[#999] border-b-[#c6c6c6] font-['Open_Sans',sans-serif]">${n}</th>`;

    const flag = '<i class="absolute left-0 top-0 w-[5px] h-[5px] bg-[#107c10] [clip-path:polygon(0_0,100%_0,0_100%)]"></i>';

    function cell(n, c) {
      const row = data[n - 3];
      const text = row ? row[c] || "" : "";
      const col = letters[c];
      const address = row && c >= 9 && c <= 13;

      // Borders
      let right = "border-r-black [border-right-style:dotted]";
      if (row && c >= 8 && c <= 13 && !(n === 8 && col === "N")) right = "border-r-black";
      if (col === "Q" && [5, 8, 9, 10, 11, 12].includes(n)) right = "border-r-transparent";
      let bottom = "border-b-[#d4d4d4]";
      if ((row && c < 3 && n < 12) || (n === 3 && col === "F")) bottom = "border-b-black";
      if (address || (n === 3 && col === "I")) bottom = "border-b-black [border-bottom-style:dotted]";

      // Contents
      let inner = text;
      let align = "justify-start";
      let size = "leading-[17px]";
      if (address || col === "P") align = "justify-center";
      if (address || (n === 3 && "EIPQ".includes(col))) size = "text-[11px] leading-[15px]";
      if ((address && col === "N") || (n === 3 && "EPQ".includes(col))) size = "text-[10px] leading-[15px]";
      if (n === 3 && "EI".includes(col)) align = "justify-center";
      if (n === 8 && col === "N") {
        align = "justify-end";
        size = "leading-[17px]";
        inner = `<a href="#" class="text-[#0563c1] underline">${text}</a>`;
      }
      if (col === "O" && text) {
        const color = n === 4 || n === 5 ? "text-[#0563c1]" : "text-[#954f72]";
        inner = `<a href="mailto:${text}" class="${color} underline">${text}</a>`;
      }
      const clip = col === "Q" ? "" : "overflow-x-clip";
      const flagged = row && text && ("AP".includes(col) || col === "D" || (col === "E" && n === 3) || (col === "N" && n !== 8));
      return `<td class="relative p-0 border-r border-b ${right} ${bottom}">${flagged ? flag : ""}<div class="h-[15px] flex px-[2px] whitespace-pre ${align} ${size} ${clip}">${inner}</div></td>`;
    }

    const group = (span, text) => `<th colspan="${span}" class="p-0 bg-[#d9d9d9] border-r border-b border-black font-bold"><div class="h-[15px] leading-[17px]">${text}</div></th>`;

    let html = `<tr class="h-4">${rowHead(1)}<th rowspan="2" class="p-0 bg-[#d9d9d9] border-r border-b border-black font-bold text-[#ff0000]">ลำดับที่*</th>${group(7, "ข้อมูลผู้ติดต่อ")}${group(6, "ข้อมูลที่อยู่จดทะเบียน")}${group(4, "ช่องทางติดต่อ")}${group(4, "ข้อมูลธนาคารของคู่ค้า")}</tr>`;
    html += `<tr class="h-4">${rowHead(2)}${heads.slice(1).map(h => `<th class="p-0 bg-[#d9d9d9] border-r border-b border-black font-normal whitespace-nowrap"><div class="h-[15px] leading-[17px] flex justify-center overflow-x-clip">${h}</div></th>`).join("")}</tr>`;
    for (let n = 3; n <= 48; n++) {
      html += `<tr class="h-4">${rowHead(n)}${letters.map((l, c) => cell(n, c)).join("")}</tr>`;
    }
    document.getElementById("rows").innerHTML = html;
  </script>

</body>
</html>
